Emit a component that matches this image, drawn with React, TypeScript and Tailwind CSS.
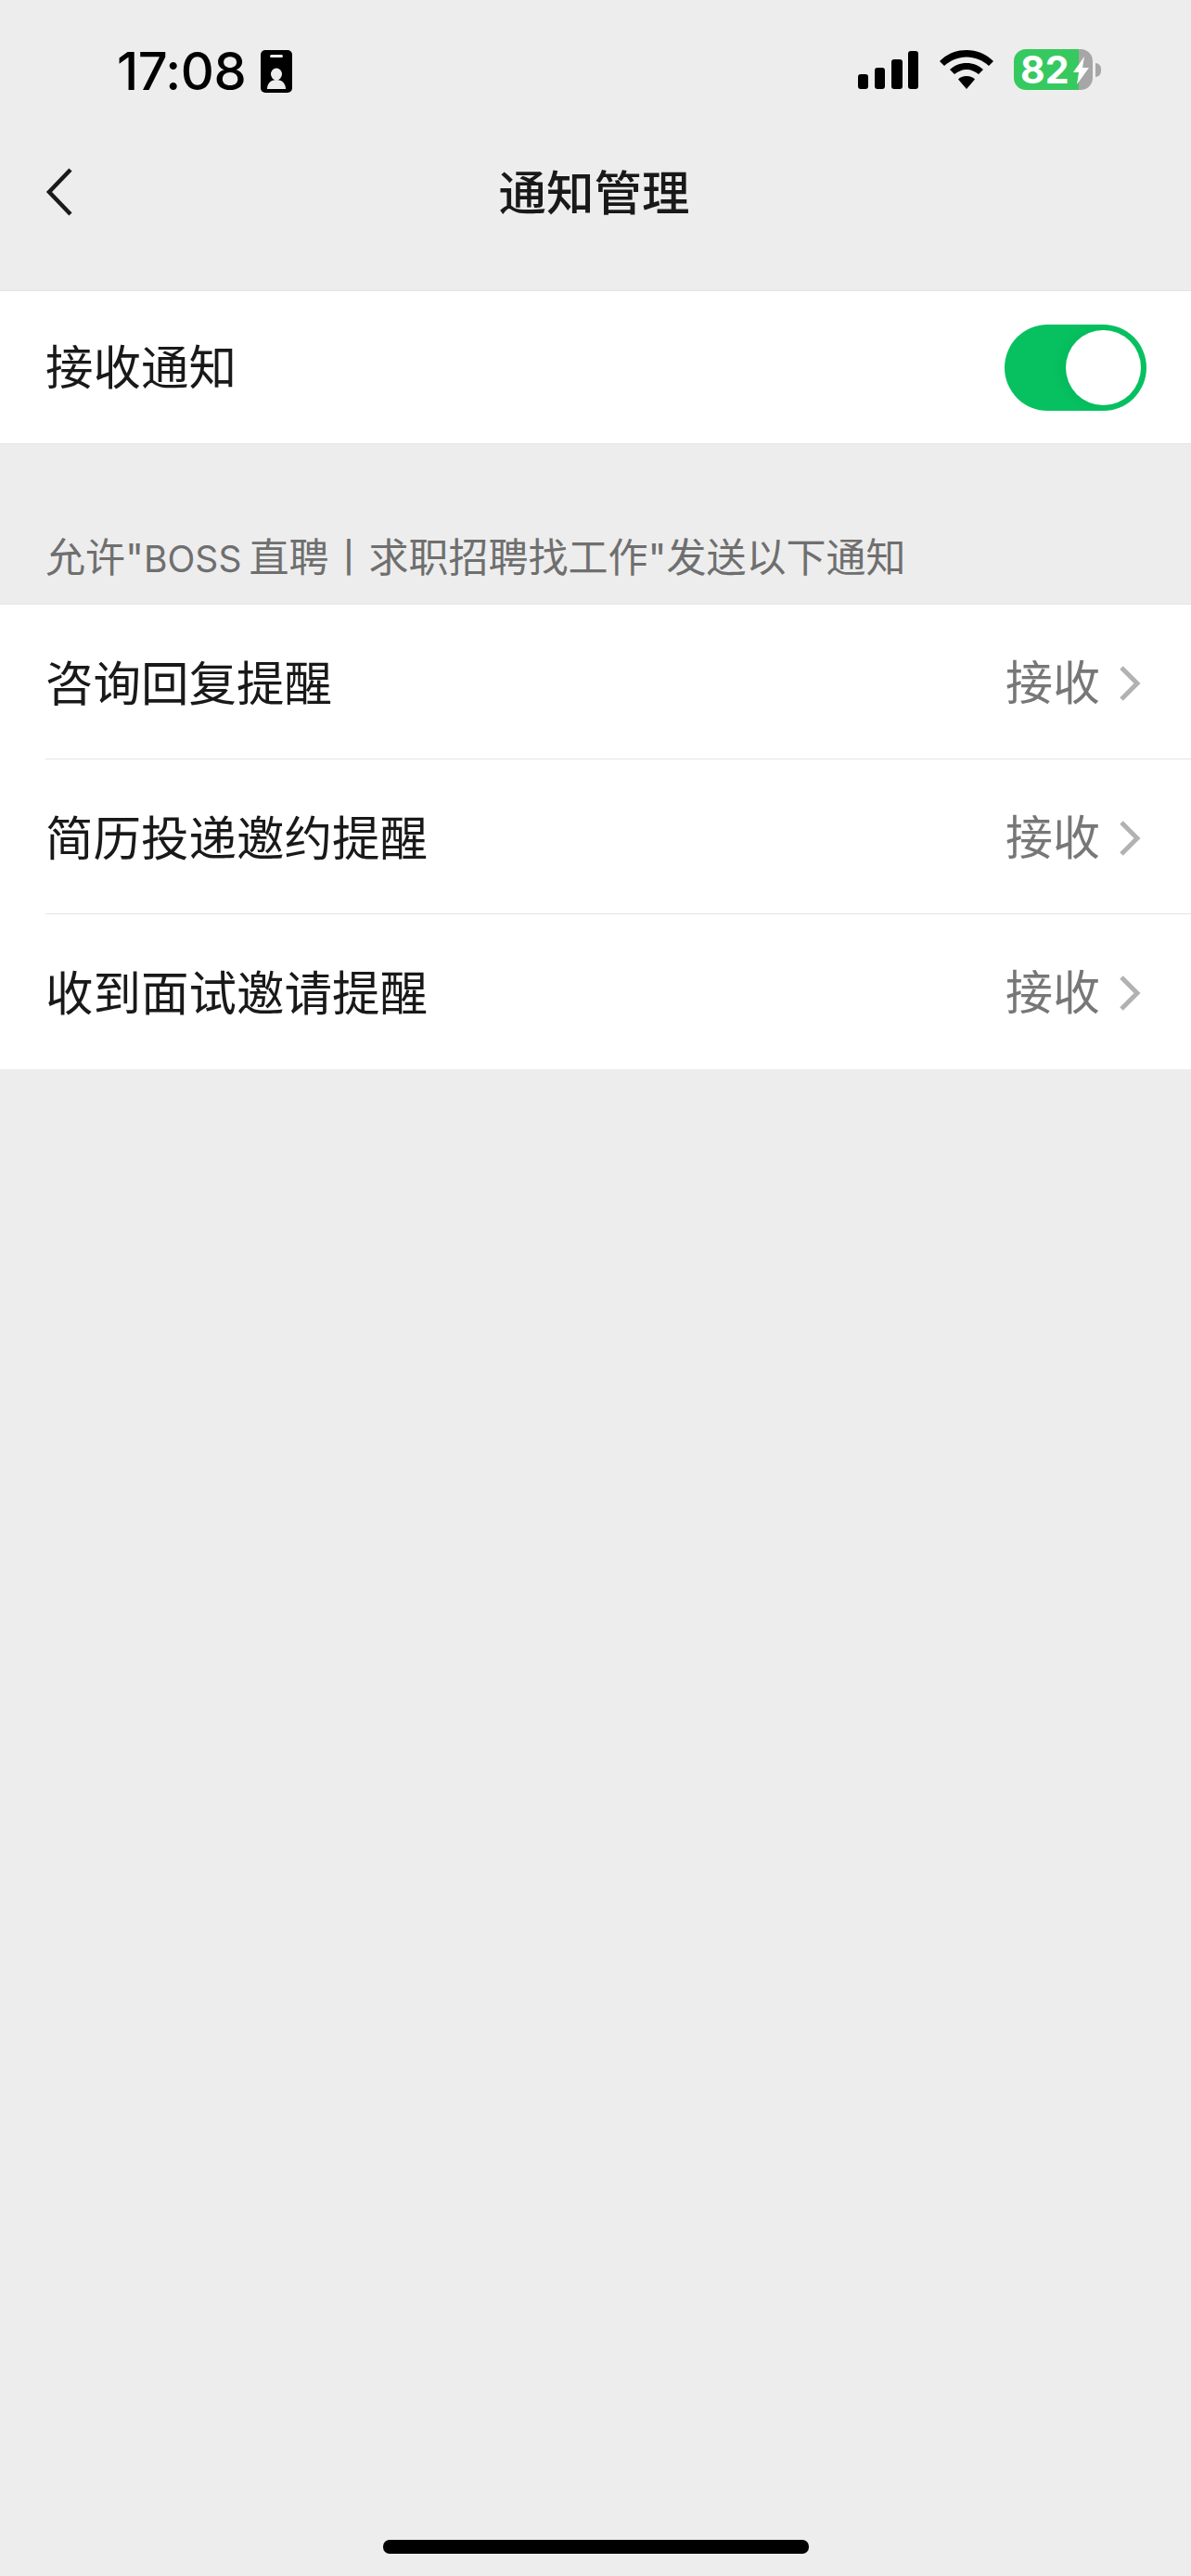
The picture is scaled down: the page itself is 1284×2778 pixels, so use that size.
import React from 'react';

const CJK = 'font-["Inter","Noto_Sans_CJK_SC","Noto_Sans",sans-serif]';

const StatusBar = () => (
  <div className="flex h-[140px] items-start justify-between pl-[126px] pr-[97px] pt-[53px]">
    <div className="flex items-start gap-[16px]">
      <span className="text-[56px] leading-[48px] font-medium tracking-[-0.5px] text-black">17:08</span>
      <svg width="34" height="46" viewBox="0 0 34 46" className="mt-[1px]">
        <rect width="34" height="46" rx="5" fill="#000" />
        <rect x="10" y="5" width="14" height="3" rx="1.500" fill="#ededed" />
        <ellipse cx="17" cy="26" rx="6" ry="6.500" fill="#ededed" />
        <path d="M7 42c0-6 4-10 10-10s10 4 10 10z" fill="#ededed" />
      </svg>
    </div>
    <div className="flex items-start">
      <svg width="65" height="41" viewBox="0 0 65 41" className="mt-[2px]">
        <rect x="0" y="25" width="11" height="16" rx="3" fill="#000" />
        <rect x="18" y="18" width="11" height="23" rx="3" fill="#000" />
        <rect x="36" y="9" width="12" height="32" rx="3" fill="#000" />
        <rect x="54" y="0" width="11" height="41" rx="3" fill="#000" />
      </svg>
      <svg width="58" height="42" viewBox="0 0 58 42" className="ml-[23px] mt-[1px]">
        <path d="M29 0c11 0 21 4 29 12l-5 5C46 11 38 7.500 29 7.500S12 11 5 17l-5-5C8 4 18 0 29 0z" fill="#000" />
        <path d="M29 14c7 0 13 2.500 18 7l-5 5c-4-3-8-5-13-5s-9 2-13 5l-5-5c5-4.500 11-7 18-7z" fill="#000" />
        <path d="M29 28c4 0 7 1.500 9 3.500L29 42l-9-10.500c2-2 5-3.500 9-3.500z" fill="#000" />
      </svg>
      <div className="relative ml-[22px] flex h-[44px] w-[85px] items-center rounded-[13px] bg-[linear-gradient(90deg,#36c95f_70px,#a6a6a6_70px)]">
        <span className="pl-[7px] text-[41px] leading-[44px] font-bold text-white">82</span>
        <svg width="17" height="30" viewBox="0 0 17 30" className="absolute left-[64px] top-[8px]">
          <path d="M12 0 0 17h6L4 30 17 12h-7z" fill="#fff" />
        </svg>
      </div>
      <div className="ml-[3px] mt-[15px] h-[15px] w-[6px] rounded-r-full bg-[#a6a6a6]" />
    </div>
  </div>
);

const NavBar = () => (
  <div className="relative flex h-[133px] items-start justify-center pr-[3px]">
    <svg width="32" height="54" viewBox="0 0 32 54" className="absolute left-[48px] top-[40px]">
      <path d="M28 3 5 27l23 24" fill="none" stroke="#1a1a1a" strokeWidth="4.500" />
    </svg>
    <span className="mt-[38px] text-[51.500px] leading-[60px] font-medium text-[#191919]">通知管理</span>
  </div>
);

const Chevron = () => (
  <svg width="24" height="40" viewBox="0 0 24 40" className="ml-[20px]">
    <path d="M3 3l17 17L3 37" fill="none" stroke="#b2b2b2" strokeWidth="5" />
  </svg>
);

const NoticeRow = ({ label, last }: { label: string; last?: boolean }) => (
  <div className="flex h-[167px] flex-col pl-[49px]">
    <div className={`flex flex-1 items-center justify-between pr-[54px] ${last ? '' : 'border-b border-[#e3e3e3]'}`}>
      <span className="mt-[3px] text-[51.500px] leading-[60px] text-[#191919]">{label}</span>
      <div className="mt-[3px] flex items-center">
        <span className="text-[51px] leading-[60px] text-[#777777]">接收</span>
        <Chevron />
      </div>
    </div>
  </div>
);

export default function App() {
  return (
    <div className={`relative flex h-[2778px] w-[1284px] flex-col overflow-hidden bg-[#ededed] ${CJK}`}>
      <StatusBar />
      <NavBar />
      <div className="mt-[40px] flex h-[166px] items-center justify-between border-y border-[#e5e5e5] bg-white pl-[49px] pr-[48px]">
        <span className="text-[51.500px] leading-[60px] text-[#191919]">接收通知</span>
        <div className="flex h-[93px] w-[153px] items-center justify-end rounded-full bg-[#07c160] pr-[6px]">
          <div className="h-[81px] w-[81px] rounded-full bg-white shadow-[-6px_0_14px_rgba(0,0,0,0.04)]" />
        </div>
      </div>
      <div className="flex h-[172px] items-end pb-[18px] pl-[49px]">
        <span className="text-[43px] leading-[60px] text-[#6f6f6f]">
          允许"<span className="mr-[8px] text-[39px]">BOSS</span>直聘丨求职招聘找工作"发送以下通知
        </span>
      </div>
      <div className="border-t border-[#e5e5e5] bg-white">
        <NoticeRow label="咨询回复提醒" />
        <NoticeRow label="简历投递邀约提醒" />
        <NoticeRow label="收到面试邀请提醒" last />
      </div>
      <div className="absolute bottom-[24px] left-[413px] h-[15px] w-[459px] rounded-[7px] bg-black" />
    </div>
  );
}
